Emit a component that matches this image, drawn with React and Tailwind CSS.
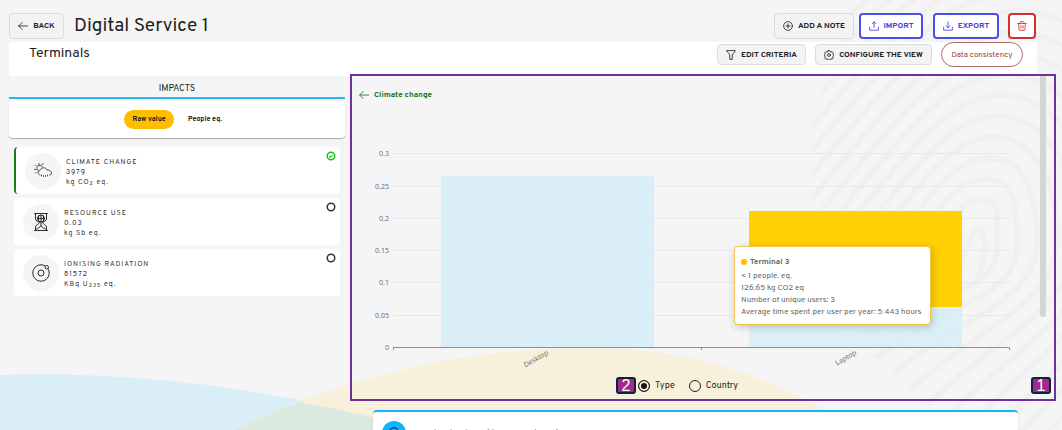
import { useState } from 'react';

const ridges = Array.from({ length: 15 }, (_, i) => i + 1);

function Backdrop() {
  return (
    <svg
      className="absolute inset-0 h-full w-full"
      viewBox="0 0 1062 430"
      preserveAspectRatio="xMidYMax slice"
      aria-hidden="true"
    >
      <defs>
        <clipPath id="print">
          <path d="M850 0H1062V430H955L812 300V120Z" />
        </clipPath>
      </defs>
      <g clipPath="url(#print)" fill="none" stroke="#f0f0f0" strokeWidth="6">
        <path d="M948 300C962 270 968 232 977 229C988 226 986 262 976 285" />
        {ridges.map((k) => (
          <path
            key={k}
            d={`M${845 + 14 * k} ${322 + 19 * k}C${925 + 14 * k} ${275 + 12 * k} ${977 + 20 * k} ${290 + 4 * k} ${977 + 20 * k} ${250 - 3 * k}C${977 + 20 * k} ${225 - 12 * k} ${993 + 10 * k} ${221 - 21 * k} ${977 + 4 * k} ${221 - 21 * k}C${955 - 4 * k} ${221 - 21 * k} ${948 - 12 * k} ${250 - 8 * k} ${885 - 21 * k} 335`}
          />
        ))}
      </g>
      <path d="M0 375C120 371 262 386 373 418L420 432H0Z" fill="#daeef7" />
      <path d="M230 432C335 380 455 348 588 348C690 348 760 374 826 411L860 432Z" fill="#f7f1db" />
      <path d="M300 402C330 408 352 412 373 418L420 432H230C256 420 278 410 300 402Z" fill="#dbeadf" />
    </svg>
  );
}

function Icon({ className = 'h-[10px] w-[10px]', children }) {
  return (
    <svg
      className={`shrink-0 ${className}`}
      viewBox="0 0 24 24"
      fill="none"
      stroke="currentColor"
      strokeWidth="2"
      strokeLinecap="round"
      strokeLinejoin="round"
      aria-hidden="true"
    >
      {children}
    </svg>
  );
}

const ArrowLeft = () => (
  <Icon><path d="M23 12H2M10 3.500L1.500 12L10 20.500" /></Icon>
);
const PlusCircle = () => (
  <Icon><circle cx="12" cy="12" r="10.500" /><path d="M12 7v10M7 12h10" /></Icon>
);
const Upload = () => (
  <Icon><path d="M12 16V2M7.500 6.500L12 2L16.500 6.500M1.500 15v7h21V15" /></Icon>
);
const Download = () => (
  <Icon><path d="M12 2V16M7.500 11.500L12 16L16.500 11.500M1.500 15v7h21V15" /></Icon>
);
const Trash = () => (
  <Icon><path d="M1.500 6h21M7.500 6V3a1.500 1.500 0 0 1 1.500-1.500h6a1.500 1.500 0 0 1 1.500 1.500V6M4 6l1 15a1.500 1.500 0 0 0 1.500 1.500h11a1.500 1.500 0 0 0 1.500-1.500l1-15M9.500 11v6M14.500 11v6" /></Icon>
);
const Funnel = () => (
  <Icon><path d="M1.500 1.500h21L15 12v10.500h-6V12Z" /></Icon>
);
const Gear = () => (
  <Icon>
    <circle cx="12" cy="12" r="3.500" />
    <path d="M10 1.500h4l.9 2.800 1.700.7 2.700-1.300 2.900 2.900-1.300 2.700.7 1.700 1.800 1v2l-1.800 1-.7 1.700 1.300 2.700-2.900 2.900-2.700-1.300-1.700.7-.9 2.800h-4l-.9-2.800-1.700-.7-2.700 1.300-2.900-2.900 1.300-2.700-.7-1.700-1.800-1v-2l1.800-1 .7-1.700-1.300-2.700 2.900-2.900 2.700 1.300 1.700-.7Z" />
  </Icon>
);

function Cloud() {
  return (
    <svg className="h-5 w-5" viewBox="0 0 40 40" fill="none" stroke="#333" strokeWidth="1.700" strokeLinecap="round" aria-hidden="true">
      <path d="M14 28c-5-1-5-8 0-9 1-6 11-8 14-1 5-1 9 3 9 6 0 3-2 4-4 4" />
      <path d="M17 28v2M21 29v2M25 29v2M29 28v2" />
      <path d="M11 20a6 6 0 1 1 8-8M6 17H3M7 10L5 8M12 8V5M18 8l2-3M7 22l-2 2" />
    </svg>
  );
}

function Hourglass() {
  return (
    <svg className="h-5 w-5" viewBox="0 0 40 40" fill="none" stroke="#222" strokeWidth="1.900" strokeLinecap="round" aria-hidden="true">
      <path d="M7 3h26M7 37h26M9 3v11c0 4 6 5 8 7 0 3-8 5-8 9v7M31 3v11c0 4-6 5-8 7 0 3 8 5 8 9v7M11 34c3-1 7-3 9-7 2 4 6 6 9 7" />
      <circle cx="20" cy="13" r="7" />
      <path d="M13 13h14M20 6v14M16 7c-2 4-2 8 0 12M24 7c2 4 2 8 0 12M20 20v7" />
    </svg>
  );
}

function Atom() {
  return (
    <svg className="h-5 w-5" viewBox="0 0 40 40" fill="none" stroke="#222" strokeWidth="1.900" aria-hidden="true">
      <circle cx="20" cy="20" r="16.500" />
      <circle cx="20" cy="20" r="6" />
      <circle cx="31.500" cy="8.500" r="3.500" fill="#f5f5f5" />
    </svg>
  );
}

const impacts = [
  { id: 'climate', name: 'CLIMATE CHANGE', value: '3979', unit: <>kg CO<sub>2</sub> eq.</>, icon: <Cloud /> },
  { id: 'resource', name: 'RESOURCE USE', value: '0.03', unit: <>kg Sb eq.</>, icon: <Hourglass /> },
  { id: 'ionising', name: 'IONISING RADIATION', value: '81572', unit: <>KBq U<sub>235</sub> eq.</>, icon: <Atom /> },
];

function ImpactCard({ item, selected, onSelect }) {
  return (
    <button
      type="button"
      aria-pressed={selected}
      onClick={onSelect}
      className={`flex h-[47px] w-full items-center gap-[5px] rounded-sm bg-white pr-1 pl-[9px] text-left ${selected ? 'border-l-2 border-[#16801a]' : ''}`}
    >
      <span className="flex h-9 w-9 shrink-0 items-center justify-center rounded-full bg-[#f5f5f5]">{item.icon}</span>
      <span className="flex-1 pt-1 text-[7px] leading-[10px] tracking-[1px] text-[#333]">
        <span className="block">{item.name}</span>
        <span className="block">{item.value}</span>
        <span className="block">{item.unit}</span>
      </span>
      <svg className="mt-1 h-[10px] w-[10px] self-start" viewBox="0 0 20 20" fill="none" strokeWidth="3" aria-hidden="true">
        <circle cx="10" cy="10" r="7.500" stroke={selected ? '#12c41a' : '#333'} />
        {selected && <path d="M6.500 10l2.500 2.500 4.500-5" stroke="#12c41a" strokeWidth="2.200" />}
      </svg>
    </button>
  );
}

const levels = [
  ['0.3', 153], ['0.25', 186], ['0.2', 218], ['0.15', 250], ['0.1', 282], ['0.05', 315], ['0', 347],
];

function Chart() {
  return (
    <svg className="block w-full" viewBox="352 110 702 262" role="img" aria-label="Climate change by terminal type">
      <rect x="441" y="176" width="213" height="171" fill="#daeef7" />
      <rect x="749" y="307" width="213" height="40" fill="#d5edf7" fillOpacity="0.85" />
      <rect x="749" y="211" width="213" height="96" fill="#ffd003" />
      {levels.map(([label, y]) => (
        <g key={label}>
          {y < 347 && (
            <>
              <path d={`M393 ${y + 0.5}H749M962 ${y + 0.5}H1010`} stroke="#e0e6f1" strokeOpacity="0.8" />
              {(y < 211 || y > 307) && <path d={`M749 ${y + 0.5}H962`} stroke="#e0e6f1" strokeOpacity="0.8" />}
            </>
          )}
          <text x="389" y={y + 3} textAnchor="end" fontSize="7" fill="#6e7079" className="font-['Noto_Sans',sans-serif]">{label}</text>
        </g>
      ))}
      <path d="M393.500 350V347.500H1009.500V350M701.500 347.500V350" fill="none" stroke="#8b8e96" />
      <text transform="translate(549 354) rotate(-30)" textAnchor="end" fontSize="7" fill="#6e7079" className="font-['Noto_Sans',sans-serif]">Desktop</text>
      <text transform="translate(857 354) rotate(-30)" textAnchor="end" fontSize="7" fill="#6e7079" className="font-['Noto_Sans',sans-serif]">Laptop</text>
    </svg>
  );
}

function Badge({ children }) {
  return (
    <span className="flex h-[17px] w-5 items-center justify-center rounded-[3px] border-2 border-[#0b2436] bg-[#a3298f] font-['Liberation_Sans',sans-serif] text-base leading-none text-white">
      {children}
    </span>
  );
}

function Choice({ label, checked, onChange }) {
  return (
    <label className="flex items-center gap-[5px] text-[9px] text-[#222]">
      <input
        type="radio"
        name="grouping"
        checked={checked}
        onChange={onChange}
        className="h-3 w-3 appearance-none rounded-full border border-[#222] bg-transparent checked:bg-[#111] checked:shadow-[inset_0_0_0_2px_#f7f1db]"
      />
      {label}
    </label>
  );
}

const plain = 'flex items-center justify-center gap-[5px] rounded-sm border border-[#dcdcdc] bg-[#f3f3f3] text-[8px] font-bold text-[#222]';
const outlined = 'flex h-[26px] items-center justify-center gap-[5px] rounded-sm border-2 bg-white text-[8px] font-bold';

export default function App() {
  const [impact, setImpact] = useState('climate');
  const [grouping, setGrouping] = useState('Type');
  return (
    <main className="relative h-screen overflow-hidden bg-[#f5f5f5] font-[Overpass,Roboto,sans-serif] text-[#222]">
      <Backdrop />
      <div className="relative">
        <header className="flex h-[42px] items-end pr-[26px] pb-[3px] pl-[9px]">
          <button type="button" className={`${plain} h-[26px] w-[55px]`}><ArrowLeft />BACK</button>
          <h1 className="ml-[10px] flex-1 text-[19px] leading-[26px]">Digital Service 1</h1>
          <button type="button" className={`${plain} h-[26px] w-20`}><PlusCircle />ADD A NOTE</button>
          <button type="button" className={`${outlined} ml-[5px] w-16 border-[#4a4fe8] text-[#3c41e0]`}><Upload />IMPORT</button>
          <button type="button" className={`${outlined} ml-[10px] w-[66px] border-[#4a4fe8] text-[#3c41e0]`}><Download />EXPORT</button>
          <button type="button" aria-label="Delete" className={`${outlined} ml-[9px] w-7 border-[#d32f2f] text-[#d32f2f]`}><Trash /></button>
        </header>

        <div className="mr-[25px] ml-[9px] flex h-[34px] items-start bg-white pr-[14px] pl-5">
          <h2 className="flex-1 text-sm leading-6">Terminals</h2>
          <div className="flex items-center gap-[9px]">
            <button type="button" className={`${plain} h-[21px] w-[89px]`}><Funnel />EDIT CRITERIA</button>
            <button type="button" className={`${plain} h-[21px] w-[117px]`}><Gear />CONFIGURE THE VIEW</button>
            <button type="button" className="h-[25px] w-[82px] rounded-full border border-[#b06a6a] bg-white text-[8px] text-[#9b3a3a]">Data consistency</button>
          </div>
        </div>

        <div className="-mt-0.5 flex items-start gap-[5px] pr-[6px] pl-[9px]">
          <aside className="w-[336px] shrink-0 pt-0.5">
            <h3 className="h-[23px] border-b-2 border-[#2bb5ea] text-center text-[9px] leading-[26px]">IMPACTS</h3>
            <div className="mt-0.5 flex h-[37px] items-center justify-center gap-[14px] rounded-sm bg-white pl-3 text-[7px] font-bold shadow-[0_1px_1px_#aaa]">
              <button type="button" className="h-[19px] w-[50px] rounded-full bg-[#ffbd00] pt-px">Raw value</button>
              <button type="button" className="h-[19px] pt-px pr-5">People eq.</button>
            </div>
            <div className="mt-[9px] flex flex-col gap-1 px-[5px]">
              {impacts.map((item) => (
                <ImpactCard key={item.id} item={item} selected={impact === item.id} onSelect={() => setImpact(item.id)} />
              ))}
            </div>
          </aside>

          <div className="min-w-0 flex-1">
            <section className="relative border-2 border-[#7130a0]">
              <a href="#climate" className="flex h-[34px] items-center gap-[5px] pt-1 pl-[7px] text-[8px] font-bold text-[#16701a]">
                <ArrowLeft />Climate change
              </a>
              <div className="relative">
                <Chart />
                <div className="absolute top-[52%] right-[123px] w-[197px] rounded-sm border border-[#f3c54f] bg-white px-[6px] pt-[9px] pb-[6px] text-[8px] leading-3 text-[#666] shadow-[1px_2px_8px_rgba(0,0,0,0.2)]">
                  <p className="mb-0.5 flex items-center gap-[3px] font-bold">
                    <span className="h-[6px] w-[6px] rounded-full bg-[#ffbd00]" />Terminal 3
                  </p>
                  <p>&lt; 1 people. eq.</p>
                  <p>126.65 kg CO2 eq</p>
                  <p>Number of unique users: 3</p>
                  <p className="whitespace-nowrap">Average time spent per user per year: 5 443 hours</p>
                </div>
              </div>
              <div className="flex h-[27px] items-center justify-center">
                <div className="flex items-center">
                  <Badge>2</Badge>
                  <fieldset className="ml-0.5 flex gap-[14px] pr-[52px]">
                    <Choice label="Type" checked={grouping === 'Type'} onChange={() => setGrouping('Type')} />
                    <Choice label="Country" checked={grouping === 'Country'} onChange={() => setGrouping('Country')} />
                  </fieldset>
                </div>
              </div>
              <div className="absolute right-[3px] bottom-[5px]"><Badge>1</Badge></div>
              <div className="absolute top-0 right-2 h-[241px] w-[6px] rounded-b-full bg-[#d5d5d5]" />
            </section>
            <section className="mt-[9px] mr-[38px] ml-[23px] flex items-start gap-2 rounded-sm border-t-2 border-[#12b5f5] bg-white px-[9px] pt-[9px] pb-4 shadow-sm">
              <span className="flex h-6 w-6 items-center justify-center rounded-full bg-[#0ab6ff] text-[#123]">
                <Icon className="h-3 w-3"><circle cx="12" cy="12" r="10.500" /><path d="M12 11v6M12 7v.5" /></Icon>
              </span>
              <h3 className="pt-[5px] text-sm">Included in the application</h3>
            </section>
          </div>
        </div>
      </div>
    </main>
  );
}
